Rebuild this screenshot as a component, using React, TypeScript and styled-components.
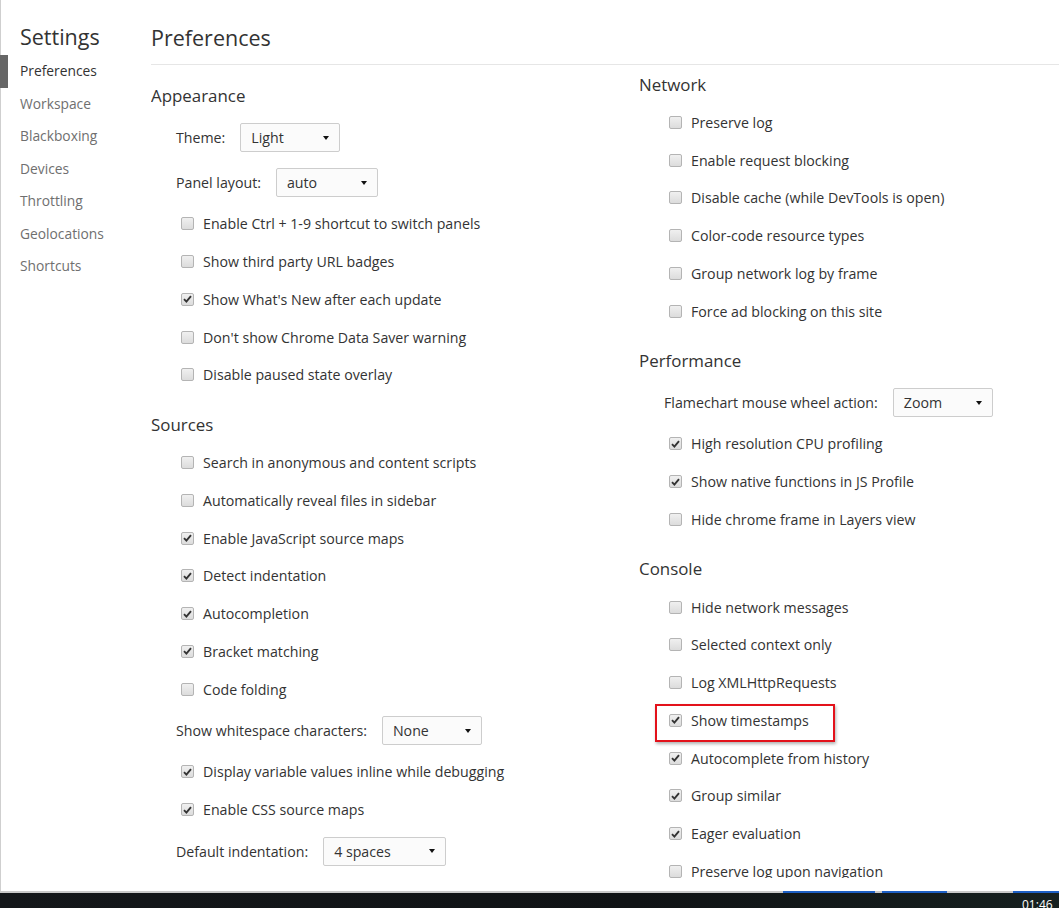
import React from "react";
import styled, { createGlobalStyle } from "styled-components";

const GlobalStyle = createGlobalStyle`
  html, body {
    margin: 0;
    padding: 0;
    background: #fff;
  }
  body {
    font-family: "Open Sans", "Noto Sans", Arial, sans-serif;
    color: #333;
    overflow: hidden;
  }
`;

const Page = styled.div`
  width: 1059px;
  height: 908px;
  display: flex;
  flex-direction: column;
  overflow: hidden;
`;

const Window = styled.div`
  height: 891px;
  display: flex;
  border-left: 1px solid #cfcfcf;
  box-sizing: border-box;
  background: #fff;
`;

const Sidebar = styled.nav`
  width: 150px;
  flex: none;
  display: flex;
  flex-direction: column;
`;

const SideTitle = styled.div`
  padding: 25px 0 6px 19px;
  line-height: 24px;
  font-size: 21.5px;
  color: #333;
`;

const NavItem = styled.div<{ $active?: boolean }>`
  height: 32.5px;
  line-height: 32.5px;
  padding-left: ${(p) => (p.$active ? "12px" : "20px")};
  border-left: ${(p) => (p.$active ? "8px solid #666" : "none")};
  margin-left: -1px;
  font-size: 13.8px;
  color: ${(p) => (p.$active ? "#333" : "#6f6f6f")};
`;

const Main = styled.main`
  flex: 1;
  display: flex;
  flex-direction: column;
  min-width: 0;
`;

const Header = styled.h1`
  margin: 0;
  padding: 26px 0 14px;
  line-height: 24px;
  height: 24px;
  font-size: 21.5px;
  font-weight: 400;
  color: #333;
  border-bottom: 1px solid #e6e6e6;
`;

const Columns = styled.div`
  height: 813px;
  overflow: hidden;
  display: grid;
  grid-template-columns: 488px 1fr;
  align-items: start;
`;

const Column = styled.div`
  display: flex;
  flex-direction: column;
`;

const SectionTitle = styled.h2<{ $top?: number }>`
  margin: ${(p) => p.$top ?? 20}px 0 9px;
  line-height: 21px;
  font-size: 16.9px;
  font-weight: 400;
  color: #333;
`;

const CheckRow = styled.label`
  position: relative;
  height: 37.75px;
  display: flex;
  align-items: center;
  padding-left: 30px;
  font-size: 14.2px;
  color: #333;
  white-space: nowrap;
`;

const Box = styled.span<{ $checked?: boolean }>`
  width: 13px;
  height: 13px;
  box-sizing: border-box;
  flex: none;
  margin-right: 9px;
  border: 1px solid #b4b4b4;
  border-radius: 2px;
  background: linear-gradient(#f0f0f0, #dcdcdc);
  display: flex;
  align-items: center;
  justify-content: center;
`;

const SelectRow = styled.div`
  height: 45px;
  display: flex;
  align-items: center;
  padding-left: 25px;
  font-size: 14.2px;
  color: #333;
  white-space: nowrap;
`;

const SelectLabel = styled.span`
  margin-right: 15px;
`;

const Select = styled.div<{ $width: number }>`
  width: ${(p) => p.$width}px;
  height: 29px;
  box-sizing: border-box;
  border: 1px solid #cdcdcd;
  border-radius: 2px;
  background: #fbfbfb;
  display: flex;
  align-items: center;
  justify-content: space-between;
  padding: 0 10px 0 10px;
  font-size: 14.2px;
  color: #333;
`;

const Arrow = styled.span`
  width: 0;
  height: 0;
  border-left: 3.5px solid transparent;
  border-right: 3.5px solid transparent;
  border-top: 4px solid #111;
`;

const Highlight = styled.span`
  position: absolute;
  left: 16px;
  top: 2px;
  width: 180px;
  height: 38px;
  box-sizing: border-box;
  border: 2px solid #e3121b;
  box-shadow: 1px 2px 3px rgba(0, 0, 0, 0.3);
  pointer-events: none;
`;

const Divider = styled.div`
  height: 2px;
  background: #c9c9c9;
  display: flex;
`;

const TaskMark = styled.span<{ $left: number; $width: number }>`
  margin-left: ${(p) => p.$left}px;
  width: ${(p) => p.$width}px;
  background: #1d5fc4;
`;

const Taskbar = styled.div`
  flex: 1;
  background: linear-gradient(90deg, #14171a, #101315 60%, #16201f);
  display: flex;
  justify-content: flex-end;
  overflow: hidden;
`;

const Clock = styled.span`
  padding-top: 4px;
  width: 37px;
  overflow: hidden;
  font-family: "Open Sans", Arial, sans-serif;
  font-size: 12px;
  line-height: 16px;
  color: #fff;
  white-space: nowrap;
`;

type Item =
  | { kind: "check"; label: string; checked?: boolean; marked?: boolean }
  | { kind: "select"; label: string; value: string; width: number }
  | { kind: "title"; label: string; top?: number };

const Check = () => (
  <svg width="9" height="8" viewBox="0 0 9 8">
    <path d="M1 4.2 L3.4 6.6 L8 1.2" fill="none" stroke="#333" strokeWidth="1.9" />
  </svg>
);

const leftItems: Item[] = [
  { kind: "title", label: "Appearance" },
  { kind: "select", label: "Theme:", value: "Light", width: 100 },
  { kind: "select", label: "Panel layout:", value: "auto", width: 102 },
  { kind: "check", label: "Enable Ctrl + 1-9 shortcut to switch panels" },
  { kind: "check", label: "Show third party URL badges" },
  { kind: "check", label: "Show What's New after each update", checked: true },
  { kind: "check", label: "Don't show Chrome Data Saver warning" },
  { kind: "check", label: "Disable paused state overlay" },
  { kind: "title", label: "Sources" },
  { kind: "check", label: "Search in anonymous and content scripts" },
  { kind: "check", label: "Automatically reveal files in sidebar" },
  { kind: "check", label: "Enable JavaScript source maps", checked: true },
  { kind: "check", label: "Detect indentation", checked: true },
  { kind: "check", label: "Autocompletion", checked: true },
  { kind: "check", label: "Bracket matching", checked: true },
  { kind: "check", label: "Code folding" },
  { kind: "select", label: "Show whitespace characters:", value: "None", width: 100 },
  { kind: "check", label: "Display variable values inline while debugging", checked: true },
  { kind: "check", label: "Enable CSS source maps", checked: true },
  { kind: "select", label: "Default indentation:", value: "4 spaces", width: 123 },
];

const rightItems: Item[] = [
  { kind: "title", label: "Network", top: 8.5 },
  { kind: "check", label: "Preserve log" },
  { kind: "check", label: "Enable request blocking" },
  { kind: "check", label: "Disable cache (while DevTools is open)" },
  { kind: "check", label: "Color-code resource types" },
  { kind: "check", label: "Group network log by frame" },
  { kind: "check", label: "Force ad blocking on this site" },
  { kind: "title", label: "Performance" },
  { kind: "select", label: "Flamechart mouse wheel action:", value: "Zoom", width: 100 },
  { kind: "check", label: "High resolution CPU profiling", checked: true },
  { kind: "check", label: "Show native functions in JS Profile", checked: true },
  { kind: "check", label: "Hide chrome frame in Layers view" },
  { kind: "title", label: "Console" },
  { kind: "check", label: "Hide network messages" },
  { kind: "check", label: "Selected context only" },
  { kind: "check", label: "Log XMLHttpRequests" },
  { kind: "check", label: "Show timestamps", checked: true, marked: true },
  { kind: "check", label: "Autocomplete from history", checked: true },
  { kind: "check", label: "Group similar", checked: true },
  { kind: "check", label: "Eager evaluation", checked: true },
  { kind: "check", label: "Preserve log upon navigation" },
];

const renderItem = (item: Item, i: number) => {
  if (item.kind === "title") {
    return (
      <SectionTitle key={i} $top={item.top}>
        {item.label}
      </SectionTitle>
    );
  }
  if (item.kind === "select") {
    return (
      <SelectRow key={i}>
        <SelectLabel>{item.label}</SelectLabel>
        <Select $width={item.width}>
          <span>{item.value}</span>
          <Arrow />
        </Select>
      </SelectRow>
    );
  }
  return (
    <CheckRow key={i}>
      <Box $checked={item.checked}>{item.checked && <Check />}</Box>
      {item.label}
      {item.marked && <Highlight />}
    </CheckRow>
  );
};

const navItems = [
  "Preferences",
  "Workspace",
  "Blackboxing",
  "Devices",
  "Throttling",
  "Geolocations",
  "Shortcuts",
];

export default function App() {
  return (
    <>
      <GlobalStyle />
      <Page>
        <Window>
          <Sidebar>
            <SideTitle>Settings</SideTitle>
            {navItems.map((n, i) => (
              <NavItem key={n} $active={i === 0}>
                {n}
              </NavItem>
            ))}
          </Sidebar>
          <Main>
            <Header>Preferences</Header>
            <Columns>
              <Column>{leftItems.map(renderItem)}</Column>
              <Column>{rightItems.map(renderItem)}</Column>
            </Columns>
          </Main>
        </Window>
        <Divider>
          <TaskMark $left={783} $width={92} />
          <TaskMark $left={7} $width={65} />
          <TaskMark $left={66} $width={46} />
        </Divider>
        <Taskbar>
          <Clock>01:46</Clock>
        </Taskbar>
      </Page>
    </>
  );
}
